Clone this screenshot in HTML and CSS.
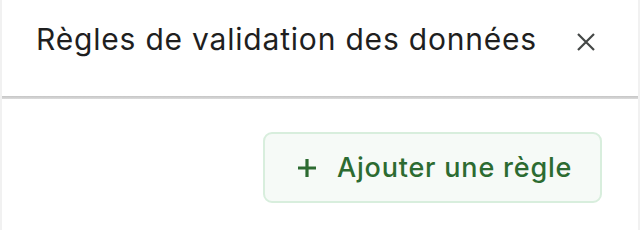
FILE: index.html
```html
<!DOCTYPE html>
<html lang="fr">
<head>
<meta charset="utf-8">
<link rel="stylesheet" href="styles.css">
</head>
<body>
<div class="panel">
  <header class="header">
    <h1 class="title">Règles de validation des données</h1>
    <button class="close" aria-label="Fermer">
      <svg width="20" height="20" viewBox="0 0 20 20"><path d="M2 2 L18 18 M18 2 L2 18" stroke="#444746" stroke-width="2.2" fill="none"/></svg>
    </button>
  </header>
  <div class="divider"></div>
  <div class="body">
    <button class="add">
      <svg class="plus" width="20" height="20" viewBox="0 0 20 20"><path d="M10 1 V19 M1 10 H19" stroke="#2c6b31" stroke-width="3.2" fill="none"/></svg>
      <span>Ajouter une règle</span>
    </button>
  </div>
</div>
</body>
</html>
```
FILE: styles.css
```css
html, body {
  margin: 0;
  padding: 0;
  background: #ffffff;
}
body {
  width: 640px;
  height: 230px;
  overflow: hidden;
  font-family: Inter, Roboto, "Liberation Sans", sans-serif;
}
.panel {
  height: 230px;
  border-left: 2px solid #f1f1f1;
  border-right: 2px solid #f1f1f1;
  box-sizing: border-box;
}
.header {
  height: 96px;
  display: flex;
  align-items: flex-start;
  justify-content: space-between;
  padding: 0 42px 0 34px;
}
.title {
  margin: 0;
  padding-top: 21px;
  font-size: 30px;
  font-weight: 400;
  letter-spacing: 0.8px;
  color: #1f1f1f;
  line-height: 36px;
}
.close {
  margin-top: 32px;
  border: 0;
  background: none;
  padding: 0;
  width: 20px;
  height: 20px;
  display: block;
}
.close svg { display: block; }
.divider {
  height: 3px;
  background: linear-gradient(#c5c5c5, #dcdcdc);
}
.body {
  display: flex;
  justify-content: flex-end;
  padding: 33px 36px 0 0;
}
.add {
  display: flex;
  align-items: center;
  gap: 20px;
  height: 71px;
  width: 339px;
  box-sizing: border-box;
  padding: 0 0 0 32px;
  border: 2px solid #d8eedd;
  border-radius: 9px;
  background: #f6faf7;
  font-family: Inter, Roboto, "Liberation Sans", sans-serif;
  font-size: 27px;
  font-weight: 500;
  letter-spacing: 0.8px;
  color: #2c6b31;
}
.plus { display: block; flex: none; }
```
